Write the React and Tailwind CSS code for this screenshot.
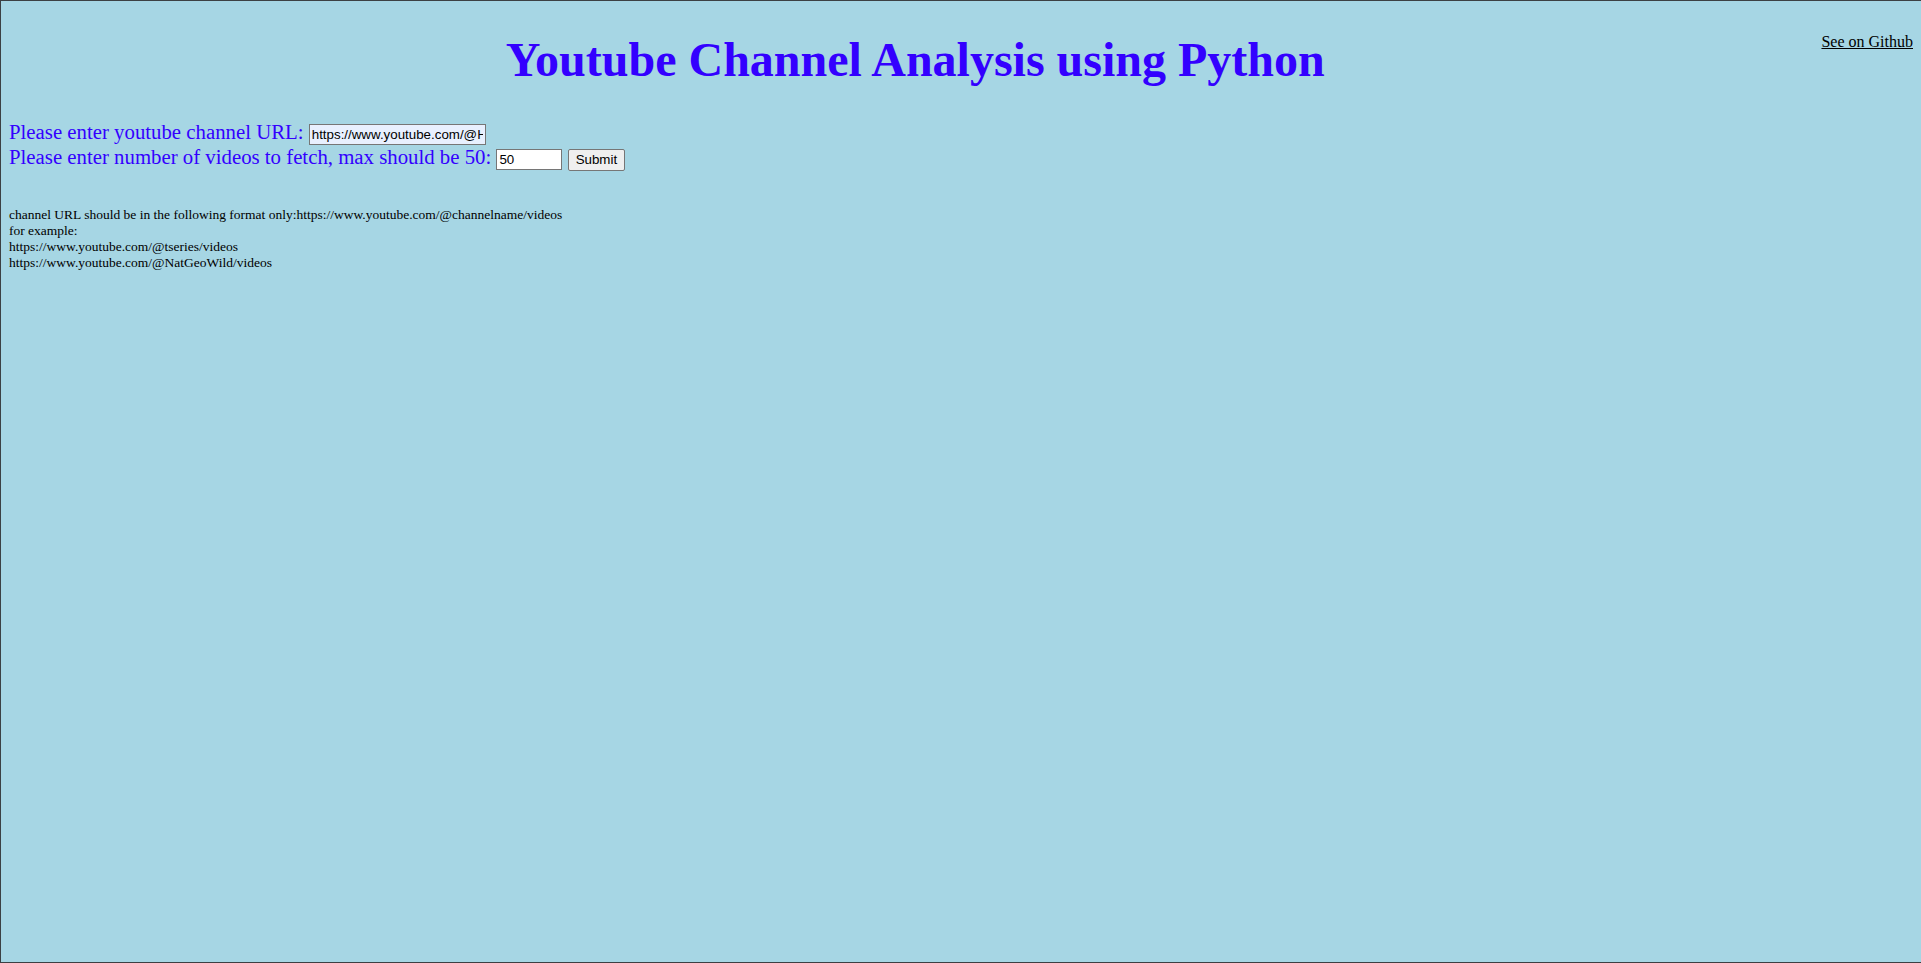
import { useState } from 'react';

const EXAMPLES = [
  'https://www.youtube.com/@tseries/videos',
  'https://www.youtube.com/@NatGeoWild/videos',
];

export default function App() {
  const [url, setUrl] = useState('https://www.youtube.com/@HarshalPatel/videos');
  const [count, setCount] = useState('50');

  return (
    <div className="h-[963px] border-t border-l border-b border-[#3c4043] bg-[#a6d6e4] pl-[8px] pr-[8px] font-['Liberation_Serif',serif]">
      {/* header */}
      <div className="flex items-start pt-[32px]">
        <h1 className="flex-1 text-center text-[48px] font-bold leading-[54px] text-[#3300ff]">
          Youtube Channel Analysis using Python
        </h1>
        <a href="#" className="text-[16px] leading-[18px] text-black underline">
          See on Github
        </a>
      </div>

      {/* form */}
      <form className="mt-[32px] text-[20.8px] leading-[25px] text-[#3300ff]" onSubmit={e => e.preventDefault()}>
        <div>
          Please enter youtube channel URL:{' '}
          <input
            type="text"
            value={url}
            onChange={e => setUrl(e.target.value)}
            className="inline-block h-[21px] w-[177px] border border-[#767676] bg-[#e8f0fe] px-[2px] align-baseline font-['Liberation_Sans',sans-serif] text-[13.33px] leading-[15px] text-black"
          />
        </div>
        <div className="-mt-[1px]">
          Please enter number of videos to fetch, max should be 50:{' '}
          <input
            type="text"
            value={count}
            onChange={e => setCount(e.target.value)}
            className="inline-block h-[21px] w-[66px] border border-[#767676] bg-white px-[2px] align-baseline font-['Liberation_Sans',sans-serif] text-[13.33px] leading-[15px] text-black"
          />{' '}
          <button
            type="submit"
            className="inline-block h-[22px] rounded-[2px] border border-[#767676] bg-[#efefef] px-[7px] align-baseline font-['Liberation_Sans',sans-serif] text-[13.33px] leading-[15px] text-black"
          >
            Submit
          </button>
        </div>
      </form>

      {/* help text */}
      <div className="mt-[36px] text-[13.5px] leading-[16px] text-black">
        <div>channel URL should be in the following format only:https://www.youtube.com/@channelname/videos</div>
        <div>for example:</div>
        {EXAMPLES.map(ex => (
          <div key={ex}>{ex}</div>
        ))}
      </div>
    </div>
  );
}
